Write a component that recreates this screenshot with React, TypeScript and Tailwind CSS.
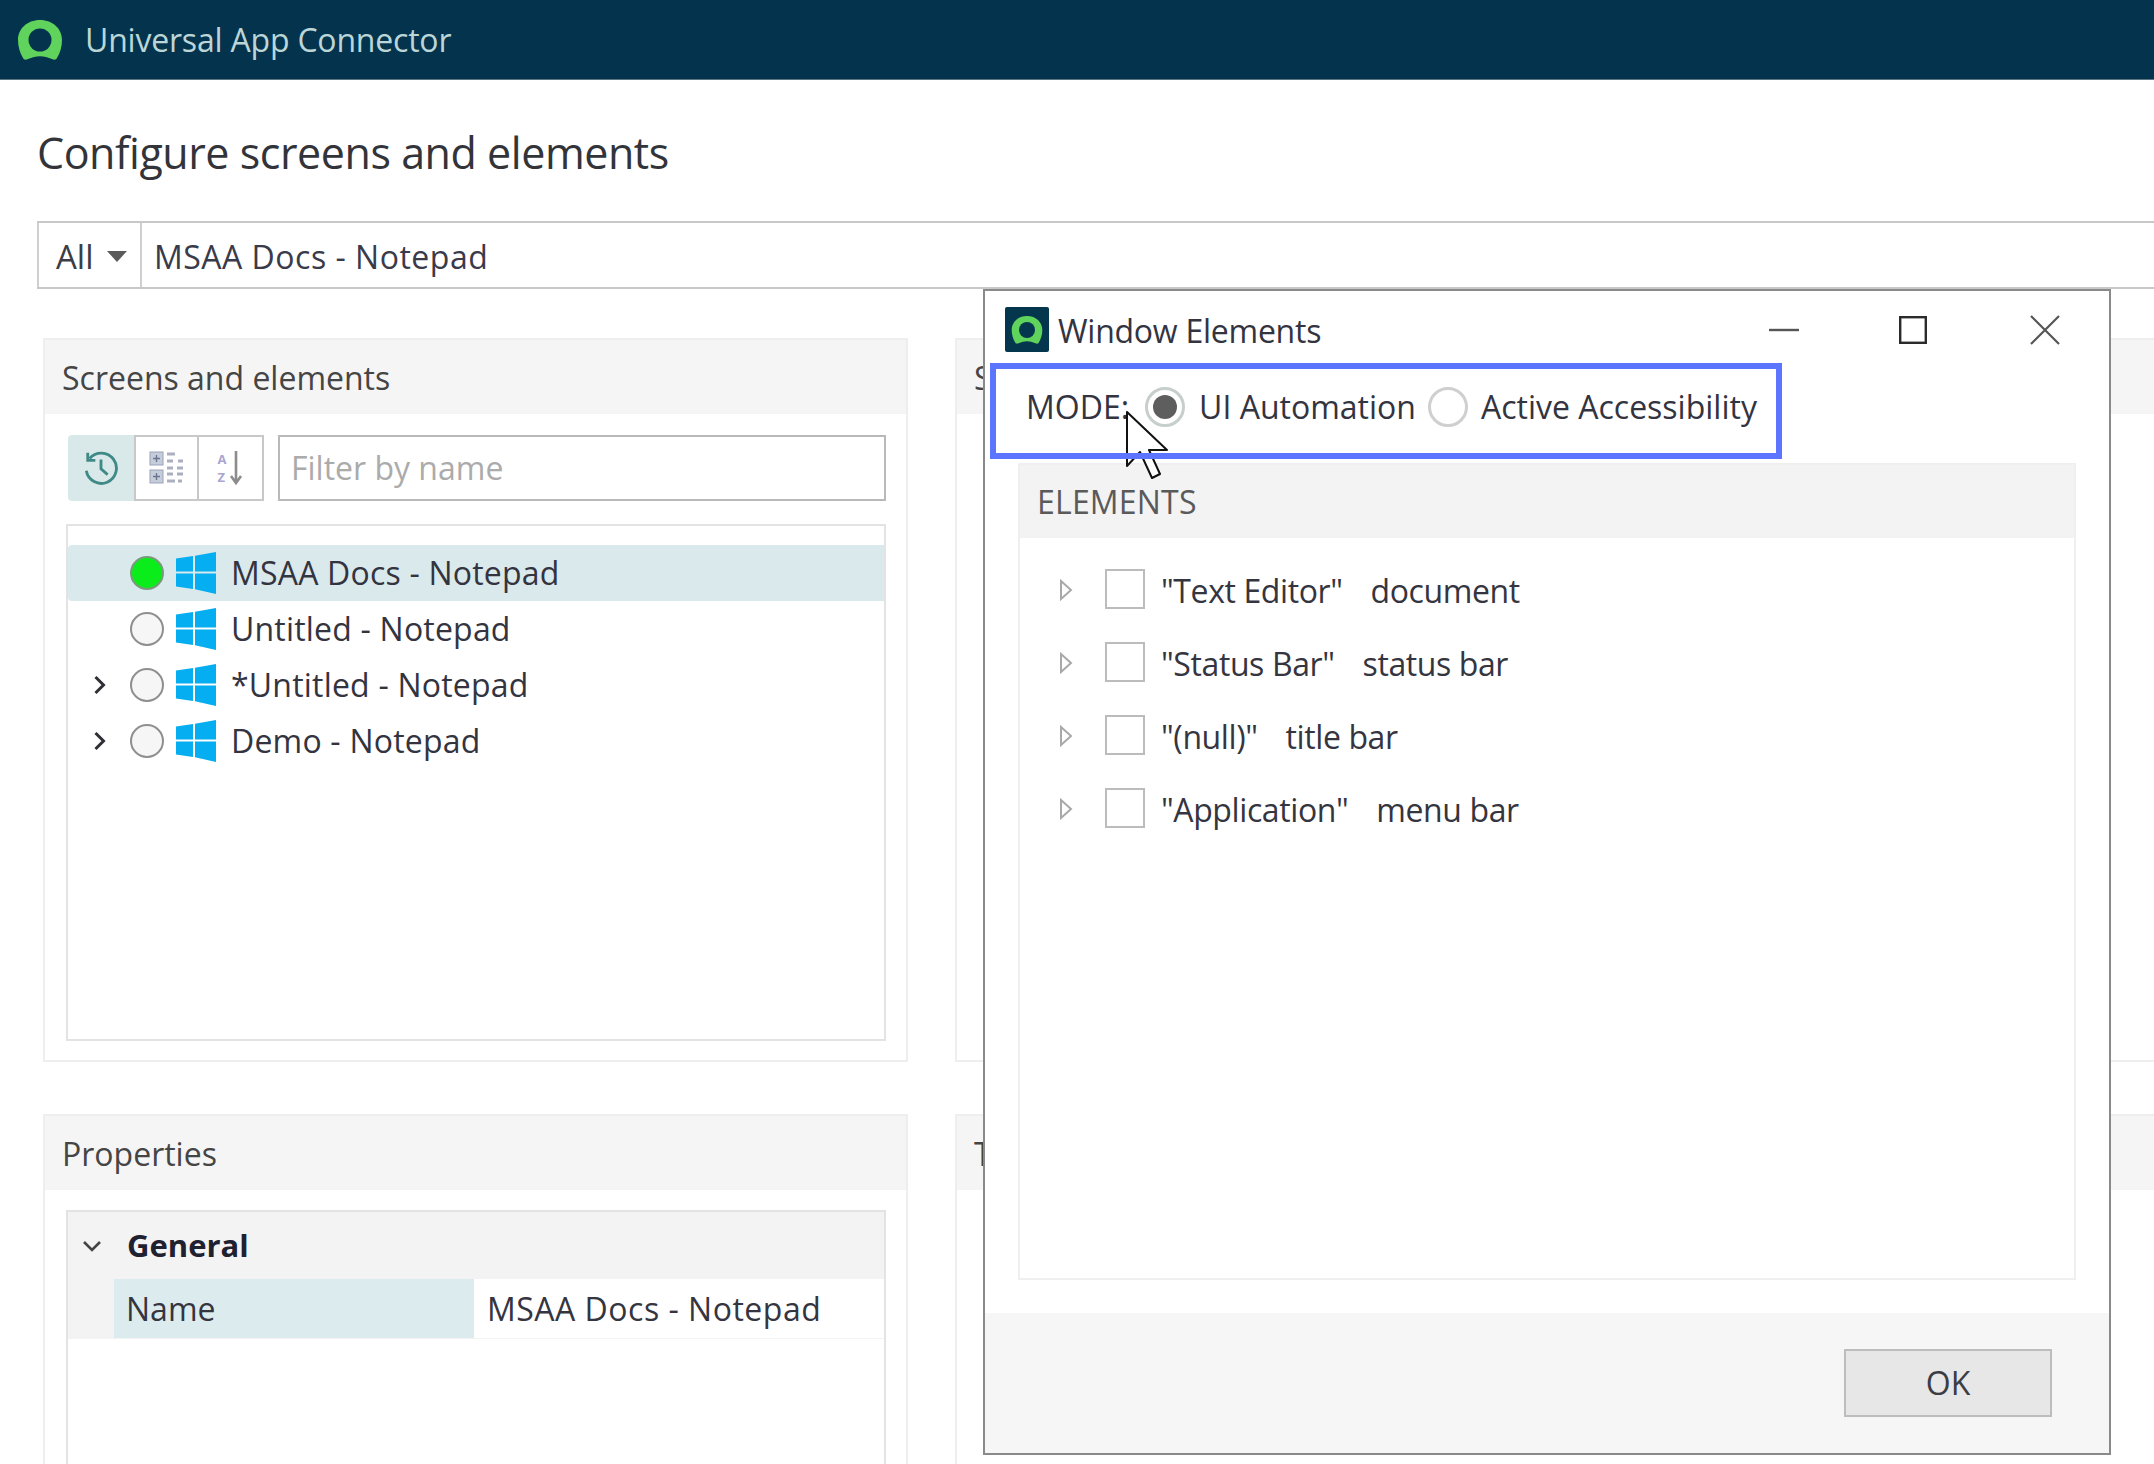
import React from 'react';

const FONT = 'font-["Open_Sans","Noto_Sans",sans-serif]';

function RingLogo({ notch, className }: { notch: string; className?: string }) {
  return (
    <svg viewBox="0 0 46 42" className={className}>
      <path
        d="M23 1C10 1 1 10 1 21c0 7 2 13 5 18 1 2 3 2 5 1l6-2c4-1 8-1 12 0l6 2c2 1 4 1 5-1 3-5 5-11 5-18C45 10 36 1 23 1Z"
        fill="#5fd35b"
      />
      <circle cx="23" cy="21" r="11.5" fill={notch} />
    </svg>
  );
}

function WinIcon() {
  return (
    <svg viewBox="0 0 40 42" className="h-[42px] w-[40px] shrink-0">
      <path d="M0 6.5 17 4v15.6H0Z" fill="#05aef0" />
      <path d="M19 3.7 40 0v19.6H19Z" fill="#05aef0" />
      <path d="M0 21.4h17v15.6L0 34.6Z" fill="#05aef0" />
      <path d="M19 21.4h21V42l-21-4.7Z" fill="#05aef0" />
    </svg>
  );
}

function TreeRow({ label, expandable, active }: { label: string; expandable?: boolean; active?: boolean }) {
  return (
    <div className={`flex h-[56px] items-center ${active ? 'rounded-l bg-[#dae9ec]' : ''}`}>
      <div className="flex w-[62px] shrink-0 justify-center">
        {expandable && (
          <svg viewBox="0 0 12 20" className="h-[20px] w-[13px]">
            <path d="M2 2l8 8-8 8" fill="none" stroke="#2f2f35" strokeWidth="3" />
          </svg>
        )}
      </div>
      <div
        className={`h-[34px] w-[34px] shrink-0 rounded-full border-2 ${
          active ? 'border-[#7a9a7d] bg-[#0bec1b]' : 'border-[#8f8f8f] bg-[#f6f6f6]'
        }`}
      />
      <div className="ml-[12px] mr-[15px]">
        <WinIcon />
      </div>
      <span className="whitespace-nowrap text-[32px] tracking-[0.2px] text-[#33343f]">{label}</span>
    </div>
  );
}

function PanelHead({ title }: { title: string }) {
  return (
    <div className="flex h-[74px] items-center bg-[#f5f5f5] pl-[17px] pt-[2px] text-[32px] font-medium text-[#454545]">
      {title}
    </div>
  );
}

function ElementRow({ name, kind }: { name: string; kind: string }) {
  return (
    <div className="flex h-[73px] items-center">
      <svg viewBox="0 0 14 22" className="-mt-[2px] ml-[39px] h-[22px] w-[14px] shrink-0">
        <path d="M2 2l10 9-10 9Z" fill="none" stroke="#a9a9a9" strokeWidth="2" />
      </svg>
      <div className="-mt-[3px] ml-[32px] h-[40px] w-[40px] shrink-0 border-2 border-[#bcbcbc] bg-white" />
      <span className="ml-[16px] whitespace-nowrap text-[32px] tracking-[-0.4px] text-[#35353f]">{name}</span>
      <span className="ml-[28px] whitespace-nowrap text-[32px] tracking-[-0.4px] text-[#35353f]">{kind}</span>
    </div>
  );
}

function WindowElements() {
  return (
    <div className="absolute left-[983px] top-[289px] flex h-[1166px] w-[1128px] flex-col border-2 border-[#8a8a8a] bg-white">
      <div className="flex h-[77px] shrink-0 items-center pl-[20px]">
        <div className="flex h-[45px] w-[44px] items-center justify-center rounded-[2px] bg-[#04364e]">
          <RingLogo notch="#04364e" className="h-[30px] w-[32px]" />
        </div>
        <span className="ml-[9px] pt-[3px] text-[32px] tracking-[-0.25px] text-[#33343f]">Window Elements</span>
        <div className="ml-auto flex items-center">
          <svg viewBox="0 0 30 30" className="h-[30px] w-[30px]">
            <path d="M0 15h30" stroke="#555" strokeWidth="2.4" />
          </svg>
          <svg viewBox="0 0 28 28" className="ml-[100px] h-[28px] w-[28px]">
            <rect x="1.2" y="1.2" width="25.6" height="25.6" fill="none" stroke="#2b2b2b" strokeWidth="2.4" />
          </svg>
          <svg viewBox="0 0 30 30" className="ml-[103px] mr-[49px] h-[30px] w-[30px]">
            <path d="M1 1l28 28M29 1 1 29" stroke="#555" strokeWidth="2.2" />
          </svg>
        </div>
      </div>
      <div className="flex h-[95px] shrink-0 items-center pl-[41px] pb-[18px] text-[32px] text-[#33343f]">
        <span>MODE:</span>
        <div className="ml-[16px] flex h-[40px] w-[40px] items-center justify-center rounded-full border-[3px] border-[#c6cfcd]">
          <div className="h-[24px] w-[24px] rounded-full bg-[#5e5e5e]" />
        </div>
        <span className="ml-[14px]">UI Automation</span>
        <div className="ml-[12px] h-[40px] w-[40px] rounded-full border-[3px] border-[#cfcfcf]" />
        <span className="ml-[13px]">Active Accessibility</span>
      </div>
      <div className="mx-[33px] h-[817px] shrink-0 border-2 border-[#efefef] bg-white">
        <div className="flex h-[73px] items-center bg-[#f3f3f3] pl-[17px] text-[32px] font-medium tracking-[0.2px] text-[#5a5a5a]">
          ELEMENTS
        </div>
        <div className="pt-[16px]">
          <ElementRow name={'"Text Editor"'} kind="document" />
          <ElementRow name={'"Status Bar"'} kind="status bar" />
          <ElementRow name={'"(null)"'} kind="title bar" />
          <ElementRow name={'"Application"'} kind="menu bar" />
        </div>
      </div>
      <div className="mt-[33px] flex flex-1 items-start justify-end bg-[#f6f6f6] pr-[57px] pt-[36px]">
        <div className="flex h-[68px] w-[208px] items-center justify-center border-2 border-[#bdbdbd] bg-[#e7e7e7] text-[32px] text-[#3c3c44]">
          OK
        </div>
      </div>
    </div>
  );
}

export default function App() {
  return (
    <div className={`relative h-[1464px] w-[2154px] overflow-hidden bg-white ${FONT}`}>
      <div className="flex h-[80px] items-center border-b border-[#5b7382] bg-[#04344d] pl-[17px]">
        <RingLogo notch="#04344d" className="h-[42px] w-[46px]" />
        <span className="ml-[22px] text-[32px] tracking-[-0.2px] text-[#bcd6d8]">Universal App Connector</span>
      </div>

      <div className="pl-[37px] pt-[46px] text-[43px] leading-[54px] tracking-[-0.45px] text-[#33343a]">
        Configure screens and elements
      </div>

      <div className="ml-[37px] mt-[41px] flex h-[68px] border-y-2 border-[#c8c8c8]">
        <div className="flex w-[105px] items-center border-x-2 border-[#cfcfcf] pl-[17px] pt-[3px] text-[33px] text-[#3d3d45]">
          All
          <svg viewBox="0 0 20 11" className="ml-[13px] h-[11px] w-[20px]">
            <path d="M0 0h20L10 11Z" fill="#5a5a5a" />
          </svg>
        </div>
        <div className="flex flex-1 items-center pl-[12px] pt-[3px] text-[32px] tracking-[0.5px] text-[#3a3b4a]">
          MSAA Docs - Notepad
        </div>
      </div>

      <div className="ml-[43px] mt-[49px] flex h-[724px] gap-[47px]">
        <div className="w-[865px] shrink-0 border-2 border-[#eeeeee]">
          <PanelHead title="Screens and elements" />
          <div className="ml-[23px] mr-[20px] mt-[21px] flex h-[66px] items-stretch">
            <div className="flex w-[66px] items-center justify-center rounded-l bg-[#d9e9e9]">
              <svg viewBox="0 0 38 38" className="h-[36px] w-[36px]" fill="none" stroke="#3f8a86" strokeWidth="3">
                <path d="M7 9a16 16 0 1 1-3.5 13" />
                <path d="M5 3v8h8" />
                <path d="M19 10v10l7 6" />
              </svg>
            </div>
            <div className="flex w-[65px] items-center justify-center border-2 border-[#c8c8c8] bg-white">
              <svg viewBox="0 0 36 36" className="h-[36px] w-[36px]">
                <rect x="1" y="2" width="13" height="13" fill="#c5cddb" stroke="#9aa4b8" />
                <rect x="1" y="20" width="13" height="13" fill="#c5cddb" stroke="#9aa4b8" />
                <path d="M4 8.5h7M7.5 5v7M4 26.5h7M7.5 23v7" stroke="#6a7590" strokeWidth="1.4" />
                <path d="M18 4h8M18 11h6M29 11h5M18 18h6M28 18h6M18 24h6M28 24h6M18 31h8M29 31h4" stroke="#aab0bf" strokeWidth="3" />
              </svg>
            </div>
            <div className="flex w-[65px] items-center justify-center gap-[3px] border-2 border-l-0 border-[#c8c8c8] bg-white">
              <div className="flex flex-col gap-[2px] text-[13px] font-bold leading-[16px] text-[#a9a6d2]">
                <span>A</span>
                <span>Z</span>
              </div>
              <svg viewBox="0 0 14 36" className="h-[36px] w-[14px]">
                <path d="M7 1v32M2 26l5 7 5-7" fill="none" stroke="#8c8c8c" strokeWidth="2.6" />
              </svg>
            </div>
            <div className="ml-[14px] flex flex-1 items-center border-2 border-[#b9b9b9] pl-[11px] text-[32px] text-[#ababab]">
              Filter by name
            </div>
          </div>
          <div className="ml-[21px] mr-[20px] mt-[23px] h-[517px] border-2 border-[#e3e3e3] pt-[19px]">
            <TreeRow label="MSAA Docs - Notepad" active />
            <TreeRow label="Untitled - Notepad" />
            <TreeRow label="*Untitled - Notepad" expandable />
            <TreeRow label="Demo - Notepad" expandable />
          </div>
        </div>
        <div className="w-[1400px] shrink-0 border-2 border-[#eeeeee]">
          <PanelHead title="S" />
        </div>
      </div>

      <div className="ml-[43px] mt-[52px] flex h-[400px] gap-[47px]">
        <div className="w-[865px] shrink-0 border-2 border-[#eeeeee]">
          <PanelHead title="Properties" />
          <div className="ml-[21px] mr-[20px] mt-[20px] h-[300px] border-2 border-[#e3e3e3]">
            <div className="flex h-[67px] items-center bg-[#f3f3f3] text-[31px] font-bold text-[#1f2030]">
              <svg viewBox="0 0 20 12" className="ml-[13px] h-[12px] w-[22px]">
                <path d="M2 2l8 8 8-8" fill="none" stroke="#444" strokeWidth="2.6" />
              </svg>
              <span className="ml-[24px]">General</span>
            </div>
            <div className="flex h-[60px] border-b border-[#f3f3f3] text-[32px] text-[#35353f]">
              <div className="w-[46px] bg-[#f3f3f3]" />
              <div className="flex w-[360px] items-center bg-[#dcecee] pl-[12px]">Name</div>
              <div className="flex flex-1 items-center pl-[13px] tracking-[0.5px]">MSAA Docs - Notepad</div>
            </div>
          </div>
        </div>
        <div className="w-[1400px] shrink-0 border-2 border-[#eeeeee]">
          <PanelHead title="T" />
        </div>
      </div>

      <WindowElements />

      <svg viewBox="0 0 42 68" className="absolute left-[1126px] top-[411px] h-[68px] w-[42px]">
        <path
          d="M1 1v54l13-14 12 26 8-4-11-24h18Z"
          fill="#fff"
          stroke="#111"
          strokeWidth="2"
          strokeLinejoin="round"
        />
      </svg>
      <div className="absolute left-[990px] top-[363px] h-[96px] w-[792px] border-[6px] border-[#5b75ff]" />
    </div>
  );
}
